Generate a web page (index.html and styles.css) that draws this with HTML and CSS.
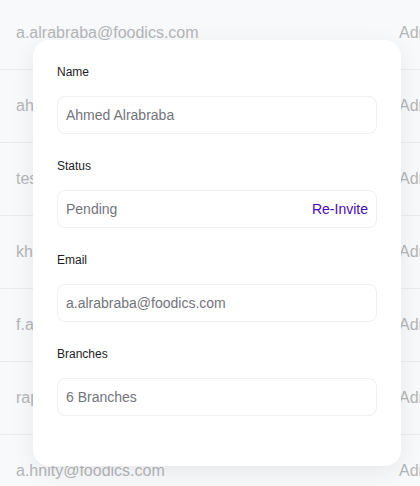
FILE: index.html
```html
<!DOCTYPE html>
<html>
<head>
<meta charset="utf-8">
<link rel="stylesheet" href="styles.css">
</head>
<body>
<div class="table">
  <div class="row"><span class="c1">a.alrabraba@foodics.com</span><span class="c2">Admin</span></div>
  <div class="row"><span class="c1">ahmed@foodics.com</span><span class="c2">Admin</span></div>
  <div class="row"><span class="c1">test@foodics.com</span><span class="c2">Admin</span></div>
  <div class="row"><span class="c1">khaled@foodics.com</span><span class="c2">Admin</span></div>
  <div class="row"><span class="c1">f.ahmed@foodics.com</span><span class="c2">Admin</span></div>
  <div class="row"><span class="c1">rapid@foodics.com</span><span class="c2">Admin</span></div>
  <div class="row"><span class="c1">a.hnity@foodics.com</span><span class="c2">Admin</span></div>
</div>
<div class="modal">
  <div class="field">
    <div class="label">Name</div>
    <div class="box">Ahmed Alrabraba</div>
  </div>
  <div class="field">
    <div class="label">Status</div>
    <div class="box"><span>Pending</span><span class="link">Re-Invite</span></div>
  </div>
  <div class="field">
    <div class="label">Email</div>
    <div class="box">a.alrabraba@foodics.com</div>
  </div>
  <div class="field">
    <div class="label">Branches</div>
    <div class="box">6 Branches</div>
  </div>
</div>
</body>
</html>
```
FILE: styles.css
```css
html, body {
  margin: 0;
  padding: 0;
  width: 420px;
  height: 486px;
  overflow: hidden;
  background: #f8f9fa;
  font-family: "Liberation Sans", Arial, sans-serif;
}
.table {
  margin-top: -3px;
}
.row {
  display: flex;
  align-items: center;
  height: 72px;
  border-bottom: 1px solid #ebecef;
  white-space: nowrap;
  overflow: hidden;
  font-size: 16px;
  color: #b4b5b9;
}
.c1 {
  flex: 0 0 399px;
  padding-left: 16px;
  box-sizing: border-box;
  overflow: hidden;
}
.c2 {
  flex: 0 0 auto;
}
.modal {
  position: absolute;
  left: 33px;
  top: 40px;
  width: 368px;
  box-sizing: border-box;
  padding: 24px 24px 26px;
  background: #ffffff;
  border-radius: 16px;
  box-shadow: 0 6px 24px rgba(0, 0, 0, 0.07);
}
.field {
  margin-bottom: 24px;
}
.label {
  font-size: 12px;
  line-height: 16px;
  color: #1d1d26;
  margin-bottom: 16px;
}
.box {
  height: 38px;
  box-sizing: border-box;
  border: 1px solid #f0f0f2;
  border-radius: 8px;
  padding: 0 8px;
  display: flex;
  align-items: center;
  justify-content: space-between;
  font-size: 14px;
  color: #74747c;
}
.link {
  color: #4a0bb0;
}
```
